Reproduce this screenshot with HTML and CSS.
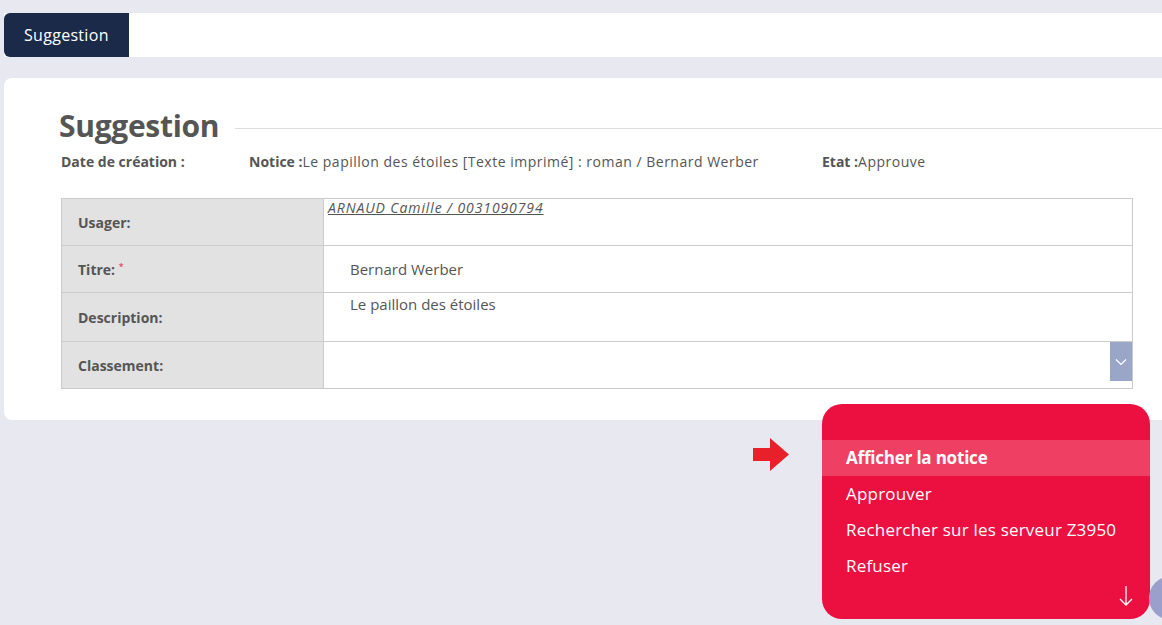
FILE: index.html
```html
<!DOCTYPE html>
<html lang="fr">
<head>
    <meta charset="UTF-8">
    <title>Suggestion</title>
    <link rel="stylesheet" href="styles.css">
</head>
<body>
    <div class="topbar">
        <div class="tab">Suggestion</div>
    </div>

    <div class="card">
        <div class="title-row">
            <h1>Suggestion</h1>
            <span class="title-line"></span>
        </div>

        <div class="infos">
            <p class="info-date"><b>Date de création :</b></p>
            <p class="info-notice"><b>Notice :</b>Le papillon des étoiles [Texte imprimé] : roman / Bernard Werber</p>
            <p class="info-etat"><b>Etat :</b>Approuve</p>
        </div>

        <table class="fiche">
            <tr class="row-usager">
                <th>Usager:</th>
                <td class="val-top"><a href="#">ARNAUD Camille / 0031090794</a></td>
            </tr>
            <tr class="row-titre">
                <th>Titre: <span class="req">*</span></th>
                <td class="val">Bernard Werber</td>
            </tr>
            <tr class="row-desc">
                <th>Description:</th>
                <td class="val val-desc">Le paillon des étoiles</td>
            </tr>
            <tr class="row-classement">
                <th>Classement:</th>
                <td class="select-cell">
                    <div class="select">
                        <span class="select-btn">
                            <svg width="12" height="8" viewBox="0 0 12 8"><path d="M1 1.5 L6 6.5 L11 1.5" fill="none" stroke="#fff" stroke-width="1.2"/></svg>
                        </span>
                    </div>
                </td>
            </tr>
        </table>
    </div>

    <!-- flèche + menu d'actions -->
    <svg class="pointer" width="36" height="33" viewBox="0 0 36 33">
        <path d="M0 10 H17 V0 L36 16.5 L17 33 V23 H0 Z" fill="#e8202a"/>
    </svg>

    <div class="actions">
        <ul>
            <li class="active">Afficher la notice</li>
            <li>Approuver</li>
            <li>Rechercher sur les serveur Z3950</li>
            <li>Refuser</li>
        </ul>
        <svg class="down" width="14" height="22" viewBox="0 0 14 22">
            <path d="M7 1 V20 M1 14 L7 20 L13 14" fill="none" stroke="#fff" stroke-width="1.3"/>
        </svg>
    </div>

    <div class="bubble"></div>
</body>
</html>
```

FILE: styles.css
```css
body {
    margin: 0;
    background-color: #e8e8f1;
    font-family: "Open Sans", Arial, sans-serif;
    color: #555;
    height: 625px;
    overflow: hidden;
    position: relative;
}
.topbar {
    margin: 13px 0 0 4px;
    height: 44px;
    background: white;
    display: flex;
}
.tab {
    background-color: #1b2a48;
    color: white;
    font-size: 16px;
    padding: 0 20px;
    display: flex;
    align-items: center;
    border-radius: 6px 0 0 6px;
    letter-spacing: 0.3px;
}
.card {
    margin: 21px 0 0 4px;
    height: 342px;
    box-sizing: border-box;
    background: white;
    border-radius: 8px 0 0 8px;
    padding: 26px 0 0 55px;
}
.title-row {
    display: flex;
    align-items: center;
}
h1 {
    margin: 0;
    font-size: 30px;
    font-weight: bold;
    color: #555;
    line-height: 44px;
    letter-spacing: -0.3px;
}
.title-line {
    flex: 1;
    height: 1px;
    background: #ddd;
    margin-left: 16px;
    margin-top: 4px;
}
.infos {
    display: flex;
    font-size: 14px;
    margin: 4px 0 0 2px;
    line-height: 20px;
    letter-spacing: 0.5px;
}
.infos p {
    margin: 0;
}
.infos b {
    color: #555;
    letter-spacing: 0;
}
.info-date {
    width: 188px;
}
.info-notice {
    width: 573px;
}
.fiche {
    margin: 26px 0 0 2px;
    width: 1072px;
    border-collapse: collapse;
    font-size: 14px;
}
.fiche th, .fiche td {
    border: 1px solid #ccc;
    padding: 0;
}
.fiche th {
    width: 245px;
    background-color: #e2e2e2;
    text-align: left;
    padding-left: 16px;
    font-weight: bold;
    color: #555;
}
.row-usager { height: 47px; }
.row-titre { height: 47px; }
.row-desc { height: 49px; }
.row-classement { height: 47px; }
.val-top {
    vertical-align: top;
    padding-left: 4px !important;
    font-style: italic;
    line-height: 18px;
    letter-spacing: 0.9px;
}
.val-top a {
    color: #555;
}
.val {
    padding-left: 26px !important;
    font-size: 15px;
}
.val-desc {
    vertical-align: top;
    padding-top: 1px !important;
}
.req {
    color: #e8203e;
    font-size: 9px;
    font-weight: normal;
    vertical-align: top;
}
.select-cell {
    vertical-align: top;
}
.select {
    display: flex;
    justify-content: flex-end;
}
.select-btn {
    width: 22px;
    height: 39px;
    background-color: #9aa6c7;
    display: flex;
    align-items: center;
    justify-content: center;
}
.pointer {
    position: absolute;
    left: 753px;
    top: 438px;
}
.actions {
    position: absolute;
    left: 822px;
    top: 404px;
    width: 328px;
    height: 215px;
    background-color: #ec1041;
    border-radius: 20px;
}
.actions ul {
    list-style: none;
    margin: 36px 0 0;
    padding: 0;
}
.actions li {
    color: white;
    font-size: 17px;
    height: 36px;
    line-height: 35px;
    padding-left: 24px;
    letter-spacing: 0.2px;
}
.actions li.active {
    background-color: #ef4063;
    font-weight: bold;
    letter-spacing: -0.2px;
}
.down {
    position: absolute;
    left: 297px;
    top: 181px;
}
.bubble {
    position: absolute;
    left: 1149px;
    top: 576px;
    width: 44px;
    height: 44px;
    border-radius: 50%;
    background-color: #9b9fcc;
}
```
